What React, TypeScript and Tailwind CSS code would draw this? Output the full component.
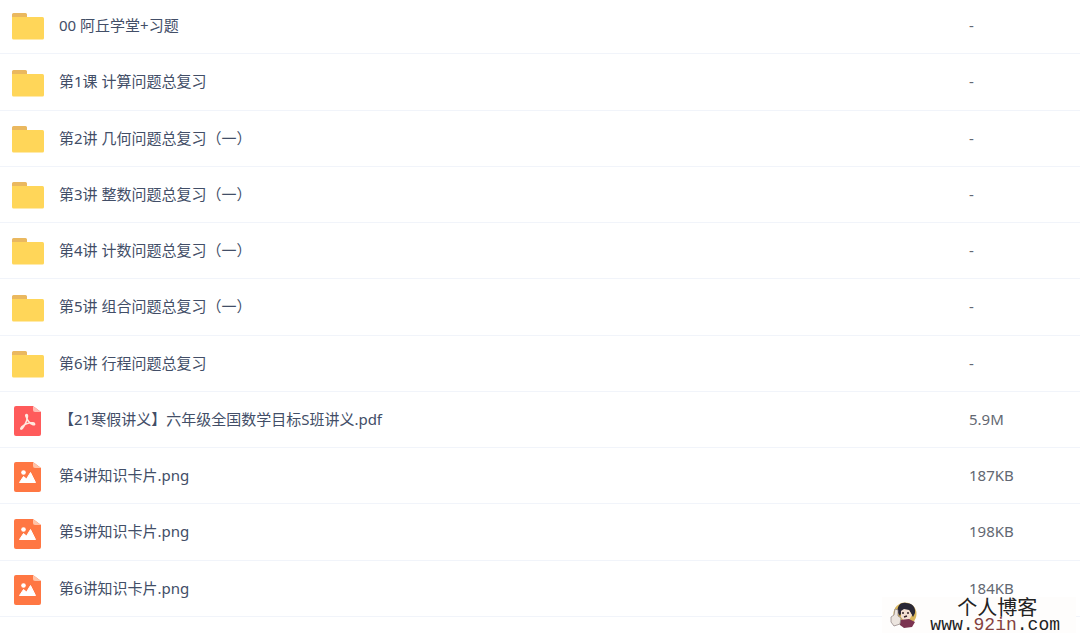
type FileKind = "folder" | "pdf" | "image";

interface FileEntry {
  name: string;
  kind: FileKind;
  size: string;
}

const files: FileEntry[] = [
  { name: "00 阿丘学堂+习题", kind: "folder", size: "-" },
  { name: "第1课 计算问题总复习", kind: "folder", size: "-" },
  { name: "第2讲 几何问题总复习（一）", kind: "folder", size: "-" },
  { name: "第3讲 整数问题总复习（一）", kind: "folder", size: "-" },
  { name: "第4讲 计数问题总复习（一）", kind: "folder", size: "-" },
  { name: "第5讲 组合问题总复习（一）", kind: "folder", size: "-" },
  { name: "第6讲 行程问题总复习", kind: "folder", size: "-" },
  { name: "【21寒假讲义】六年级全国数学目标S班讲义.pdf", kind: "pdf", size: "5.9M" },
  { name: "第4讲知识卡片.png", kind: "image", size: "187KB" },
  { name: "第5讲知识卡片.png", kind: "image", size: "198KB" },
  { name: "第6讲知识卡片.png", kind: "image", size: "184KB" },
];

function FolderIcon() {
  return (
    <svg viewBox="0 1 32 32" className="block size-8" aria-hidden="true">
      <path d="M0 5.500A1.500 1.500 0 0 1 1.500 4h12A1.500 1.500 0 0 1 15 5.500V11H0z" fill="#eab85f" />
      <path d="M0 8h30.500A1.500 1.500 0 0 1 32 9.500V29A1.500 1.500 0 0 1 30.500 30.500H1.500A1.500 1.500 0 0 1 0 29z" fill="#ffd659" />
    </svg>
  );
}

function PdfIcon() {
  return (
    <svg viewBox="0 0 32 32" className="block size-8" aria-hidden="true">
      <path d="M4 2h17l8 6v22a2 2 0 0 1-2 2H4a2 2 0 0 1-2-2V4a2 2 0 0 1 2-2z" fill="#ff5b5b" />
      <path d="M21 2l8 6h-6a2 2 0 0 1-2-2z" fill="#ffbdb5" />
      <path
        d="M14.500 10.500c-.9 0-1 1 0 3 .8 3 2.500 5.500 6.700 7.200 1.800.5 2-1.500 0-1.800-4-.5-8 1-11.700 4.300-1.500 1.500-.5 2.700.8 1.200C13 21 15 17 15.400 12.700c.2-1.500-.2-2.200-.9-2.200z"
        fill="none"
        stroke="#ffe9df"
        strokeWidth="1.600"
      />
    </svg>
  );
}

function ImageIcon() {
  return (
    <svg viewBox="0 0 32 32" className="block size-8" aria-hidden="true">
      <path d="M4 2h17l8 6v22a2 2 0 0 1-2 2H4a2 2 0 0 1-2-2V4a2 2 0 0 1 2-2z" fill="#ff7743" />
      <path d="M21 2l8 6h-6a2 2 0 0 1-2-2z" fill="#ffc3a8" />
      <circle cx="11.500" cy="12.500" r="2.300" fill="#fff" />
      <path d="M7.500 22.500l4-6 3 2.500 4-6.500L23.500 22.500z" fill="#fff" stroke="#fff" strokeLinejoin="round" />
    </svg>
  );
}

const icons = { folder: FolderIcon, pdf: PdfIcon, image: ImageIcon };

function FileRow({ file }: { file: FileEntry }) {
  const Icon = icons[file.kind];

  return (
    <tr className="h-14 border-b border-[#f1f4fa] nth-[4n+2]:h-[57px]">
      <td className="w-14 pt-0.5 pl-3">
        <Icon />
      </td>
      <td className="pl-[3px] text-[#424e67]">{file.name}</td>
      <td className="w-[111px] text-[#636872]">{file.size}</td>
    </tr>
  );
}

function Mascot() {
  return (
    <svg viewBox="0 0 28 28" className="size-7" aria-hidden="true">
      <circle cx="15" cy="13" r="11.500" fill="#d9b65c" />
      <path d="M8 12C6 4 12 1 16 2c6 0 10 4 9 10l-2 4-4-7-7 1-2 5z" fill="#2a2836" />
      <path d="M11 10l3-2 5 1 3 5-3 5-5 1-3-4z" fill="#f3dfd2" />
      <path d="M12 12h2m3 0h2m-5 4l3-1" stroke="#34242a" strokeWidth="1.500" />
      <path d="M10 19l9-1 6 3-3 5-8 1-4-3z" fill="#7b3350" />
      <path d="M1 16l3-2 1-6 3 1v6l3 2-1 6-6 2-3-4z" fill="#ece5df" stroke="#8a7d7c" strokeWidth=".7" />
    </svg>
  );
}

function Watermark() {
  return (
    <div className="absolute right-1 bottom-1 flex items-center gap-3 bg-[#fefdfc] pr-4 pl-2">
      <Mascot />
      <div className="flex flex-col items-center text-[#222]">
        <span className="pl-1 font-['Noto_Sans_CJK_SC',sans-serif] text-xl leading-5">个人博客</span>
        <span className="font-['Liberation_Mono',monospace] text-lg leading-4">
          www.<span className="text-[#84413f]">92in</span>.com
        </span>
      </div>
    </div>
  );
}

export default function App() {
  return (
    <main className="relative overflow-hidden bg-white pb-5 font-['Noto_Sans','Noto_Sans_CJK_SC',sans-serif] text-[15px]">
      <table className="-mt-[3px] w-full border-collapse text-left">
        <tbody>
          {files.map((file) => (
            <FileRow key={file.name} file={file} />
          ))}
        </tbody>
      </table>
      <Watermark />
    </main>
  );
}
